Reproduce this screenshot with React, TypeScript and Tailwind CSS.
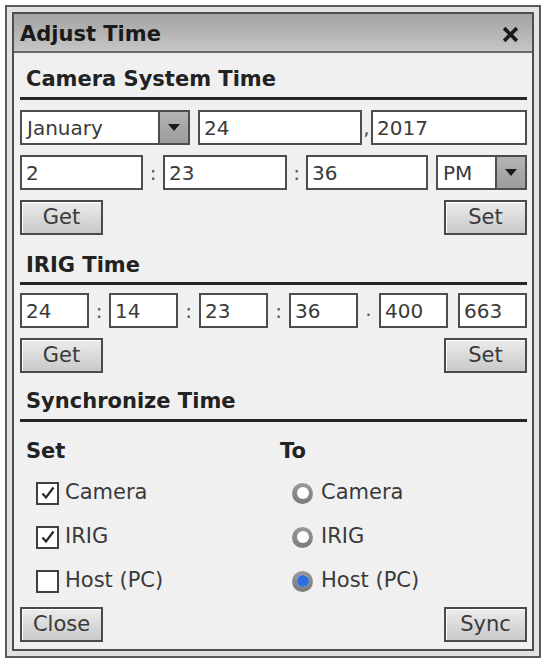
import React from 'react';

const font = "font-['DejaVu_Sans',sans-serif]";

const Field = ({ value, className = '' }: { value: string; className?: string }) => (
  <input
    readOnly
    value={value}
    className={`h-full min-w-0 border-2 border-[#4d4d4d] bg-white px-[4px] text-[20px] text-[#3a3a3a] outline-none ${font} ${className}`}
  />
);

const Sep = ({ ch, className = '' }: { ch: string; className?: string }) => (
  <div className={`flex items-center justify-center text-[20px] text-[#555] ${className}`}>{ch}</div>
);

const Select = ({ value, className = '' }: { value: string; className?: string }) => (
  <div className={`flex h-full border-2 border-[#4d4d4d] bg-white ${className}`}>
    <div className="flex flex-1 items-center px-[5px] text-[20px] text-[#3a3a3a]">{value}</div>
    <div className="flex w-[30px] items-center justify-center border-l-2 border-[#4d4d4d] bg-gradient-to-b from-[#b4b4b4] to-[#9c9c9c]">
      <svg width="12" height="7" viewBox="0 0 12 7">
        <path d="M0 0h12L6 7z" fill="#1a1a1a" />
      </svg>
    </div>
  </div>
);

const Button = ({ label }: { label: string }) => (
  <button className="flex h-[35px] w-[83px] items-center justify-center border-2 border-[#4a4a4a] bg-gradient-to-b from-[#ececec] to-[#c9c9c9] text-[21px] text-[#3a3a3a] shadow-[inset_1px_1px_0_#fff]">
    {label}
  </button>
);

const Heading = ({ title, className = '' }: { title: string; className?: string }) => (
  <div className={className}>
    <div className="h-[26px] pl-[6px] text-[21px] font-bold leading-[26px] text-[#222]">{title}</div>
  </div>
);

const Rule = ({ className = '' }: { className?: string }) => (
  <div className={`h-[3px] bg-[#262626] ${className}`} />
);

const Check = ({ checked, label }: { checked: boolean; label: string }) => (
  <div className="flex h-[30px] items-center">
    <div className="ml-[16px] flex h-[23px] w-[23px] items-center justify-center border-2 border-[#3f3f3f] bg-white">
      {checked && (
        <svg width="16" height="16" viewBox="0 0 16 16">
          <path d="M2.5 8.5l3.5 4L13.5 2.5" fill="none" stroke="#2a2a2a" strokeWidth="2.2" />
        </svg>
      )}
    </div>
    <span className="ml-[6px] text-[21px] text-[#3a3a3a]">{label}</span>
  </div>
);

const Radio = ({ checked, label }: { checked: boolean; label: string }) => (
  <div className="flex h-[30px] items-center">
    <div className="ml-[12px] flex h-[21px] w-[21px] items-center justify-center rounded-full bg-gradient-to-b from-[#9a9a9a] to-[#7a7a7a]">
      <div className="flex h-[12px] w-[12px] items-center justify-center rounded-full bg-white">
        {checked && <div className="h-[12px] w-[12px] rounded-full bg-[#2c6ee0]" />}
      </div>
    </div>
    <span className="ml-[8px] text-[21px] text-[#3a3a3a]">{label}</span>
  </div>
);

export default function App() {
  return (
    <div className={`h-[659px] w-[546px] bg-white pl-[5px] pr-[5px] pt-[5px] ${font}`}>
      {/* window frame */}
      <div className="h-[653px] w-[536px] border-2 border-[#5a5a5a] bg-[#e2e2e2] p-[5px]">
        <div className="flex h-full flex-col border-2 border-[#4e4e4e] bg-[#f0f0f0]">
          {/* title bar */}
          <div className="flex h-[39px] items-center justify-between border-b-2 border-[#6a6a6a] bg-gradient-to-b from-[#a4a4a4] via-[#b4b4b4] to-[#c6c6c6] pl-[6px] pr-[13px] pt-[4px]">
            <span className="text-[21px] font-bold text-[#1a1a1a]">Adjust Time</span>
            <svg width="17" height="17" viewBox="0 0 16 16">
              <path d="M2 2l12 12M14 2L2 14" stroke="#1a1a1a" strokeWidth="3.4" />
            </svg>
          </div>

          <div className="flex flex-1 flex-col pl-[6px] pr-[5px]">
            {/* camera system time */}
            <Heading title="Camera System Time" className="mt-[13px]" />
            <Rule className="mt-[5px]" />
            <div className="mt-[10px] flex h-[35px]">
              <Select value="January" className="w-[170px]" />
              <Field value="24" className="ml-[8px] w-[164px]" />
              <Sep ch="," className="w-[9px] items-end pb-[2px]" />
              <Field value="2017" className="flex-1" />
            </div>
            <div className="mt-[10px] flex h-[35px]">
              <Field value="2" className="w-[123px]" />
              <Sep ch=":" className="w-[20px]" />
              <Field value="23" className="w-[124px]" />
              <Sep ch=":" className="w-[19px]" />
              <Field value="36" className="w-[122px]" />
              <Select value="PM" className="ml-[8px] flex-1" />
            </div>
            <div className="mt-[10px] flex justify-between">
              <Button label="Get" />
              <Button label="Set" />
            </div>

            {/* irig time */}
            <Heading title="IRIG Time" className="mt-[17px]" />
            <Rule className="mt-[4px]" />
            <div className="mt-[8px] flex h-[35px]">
              <Field value="24" className="flex-1" />
              <Sep ch=":" className="w-[20px]" />
              <Field value="14" className="flex-1" />
              <Sep ch=":" className="w-[21px]" />
              <Field value="23" className="flex-1" />
              <Sep ch=":" className="w-[21px]" />
              <Field value="36" className="flex-1" />
              <Sep ch="." className="w-[21px] items-end pb-[4px]" />
              <Field value="400" className="flex-1" />
              <Field value="663" className="ml-[10px] flex-1" />
            </div>
            <div className="mt-[10px] flex justify-between">
              <Button label="Get" />
              <Button label="Set" />
            </div>

            {/* synchronize */}
            <Heading title="Synchronize Time" className="mt-[15px]" />
            <Rule className="mt-[5px]" />
            <div className="mt-[16px] flex">
              <div className="w-[260px]">
                <div className="h-[26px] pl-[6px] text-[21px] font-bold leading-[26px] text-[#222]">Set</div>
                <div className="mt-[14px] flex flex-col gap-[14px]">
                  <Check checked label="Camera" />
                  <Check checked label="IRIG" />
                  <Check checked={false} label="Host (PC)" />
                </div>
              </div>
              <div className="flex-1">
                <div className="h-[26px] text-[21px] font-bold leading-[26px] text-[#222]">To</div>
                <div className="mt-[14px] flex flex-col gap-[14px]">
                  <Radio checked={false} label="Camera" />
                  <Radio checked={false} label="IRIG" />
                  <Radio checked label="Host (PC)" />
                </div>
              </div>
            </div>
            <div className="mt-[11px] flex justify-between">
              <Button label="Close" />
              <Button label="Sync" />
            </div>
          </div>
        </div>
      </div>
    </div>
  );
}
